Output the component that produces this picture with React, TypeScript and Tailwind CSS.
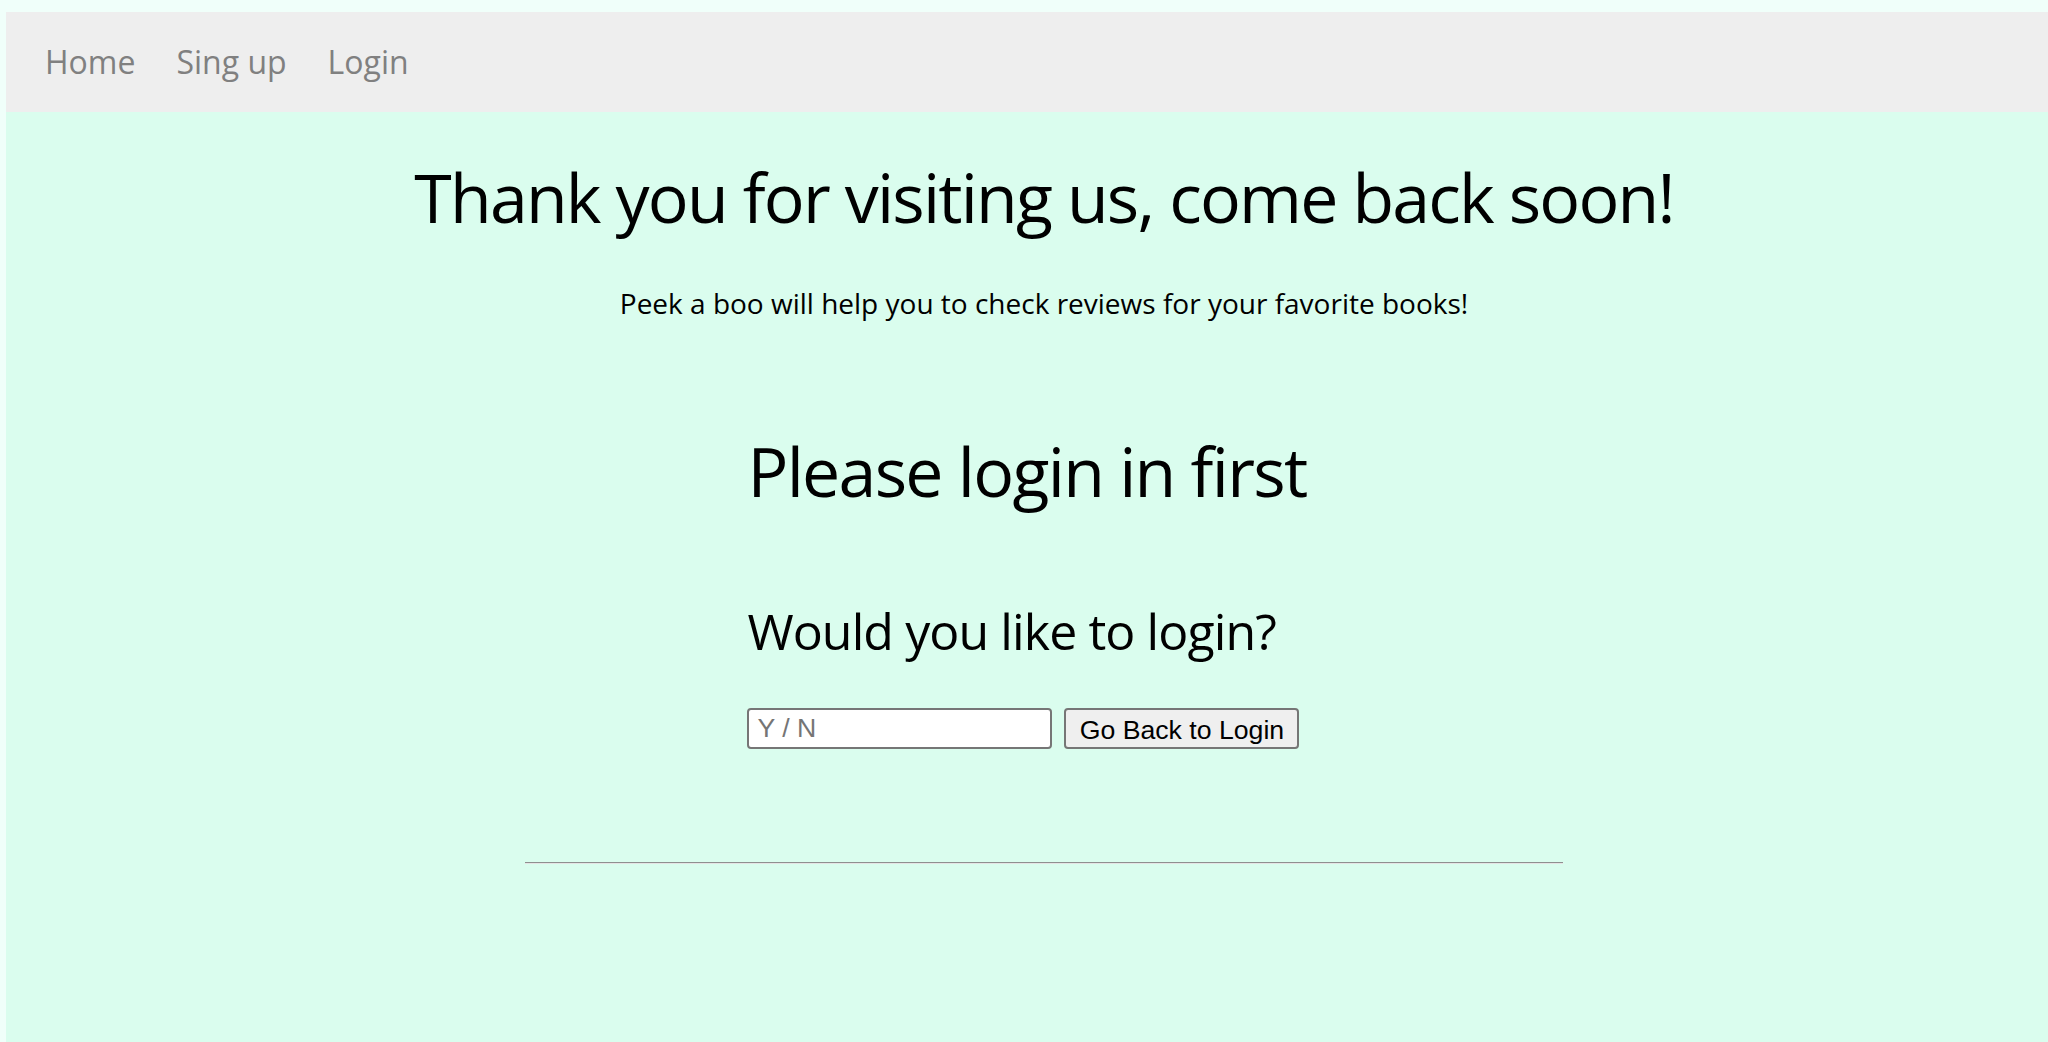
import React from 'react';

const links = ['Home', 'Sing up', 'Login'];

function NavBar() {
	return (
		<nav className="flex h-[100px] items-center gap-[41px] bg-[#eeeeee] pl-[39px] text-[32px] leading-[44px] text-[#808080]">
			{links.map((l) => (
				<a key={l} href="#" className="no-underline">
					{l}
				</a>
			))}
		</nav>
	);
}

export default function App() {
	return (
		<div className="flex h-screen flex-col bg-[#f0fffa] pl-[6px] pt-[12px]">
			<div className="flex-1 bg-[#dafdee] font-['Open_Sans',sans-serif] text-black">
				<NavBar />
				<div className="pl-[34px] text-center">
					<h1 className="mt-[38px] text-[68px] font-normal leading-[93px] tracking-[-1.8px]">Thank you for visiting us, come back soon!</h1>
					<p className="mt-[41px] text-[28px] leading-[38px]">Peek a boo will help you to check reviews for your favorite books!</p>
				</div>
				<div className="mx-auto mt-[102px] w-fit">
					<h2 className="text-[68px] font-normal leading-[93px] tracking-[-1.7px]">Please login in first</h2>
					<h3 className="mt-[80px] text-[50px] font-normal leading-[68px] tracking-[-0.9px]">Would you like to login?</h3>
					<form className="mt-[43px] flex gap-[12px] font-['Liberation_Sans',Arial,sans-serif] text-[26.67px]" onSubmit={(e) => e.preventDefault()}>
						<input
							type="text"
							placeholder="Y / N"
							className="h-[41px] w-[305px] rounded-[4px] border-2 border-[#767676] bg-white px-[8px] placeholder:text-[#757575]"
						/>
						<button type="submit" className="h-[41px] w-[235px] rounded-[4px] border-2 border-[#767676] bg-[#efefef] text-black">
							Go Back to Login
						</button>
					</form>
				</div>
				<div className="pl-[34px]">
					<hr className="mx-auto mt-[113px] w-[1038px] border-0 border-t border-b border-t-[#8f8f8f] border-b-[#e4e4e4]" />
				</div>
			</div>
		</div>
	);
}
